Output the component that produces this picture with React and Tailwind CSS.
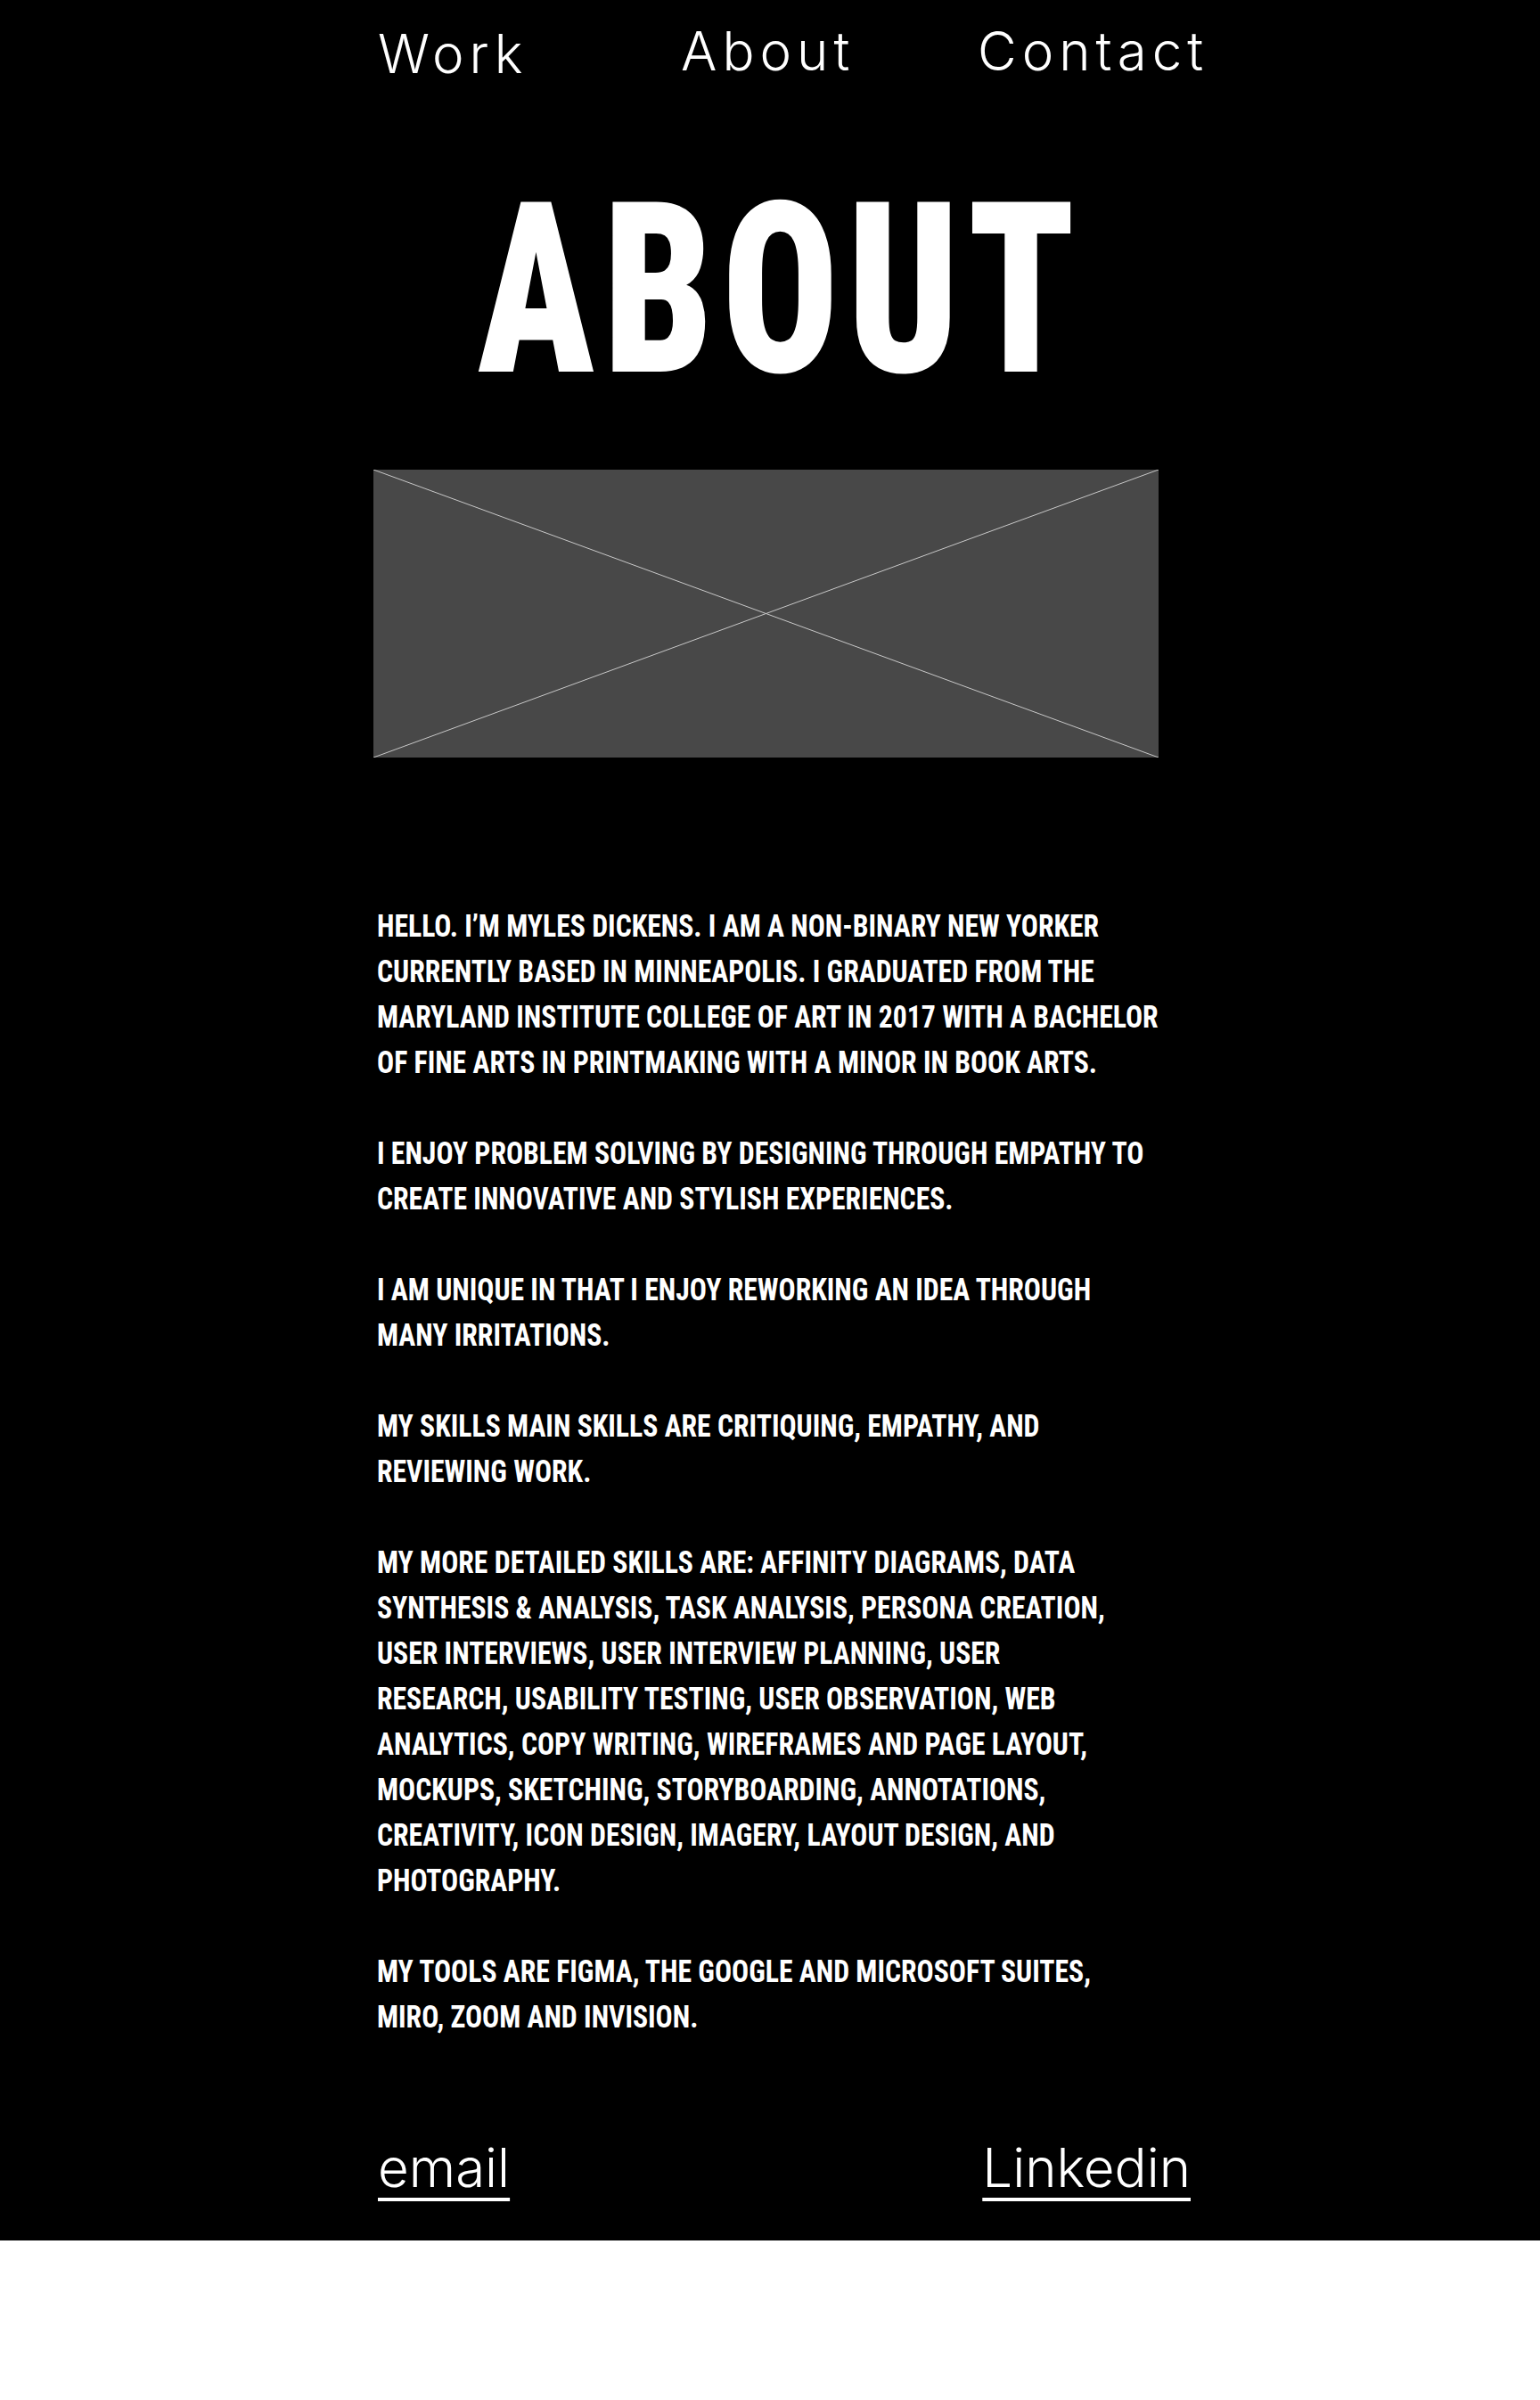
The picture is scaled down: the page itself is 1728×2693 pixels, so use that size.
const paragraphs = [
	[
		'HELLO. I’M MYLES DICKENS. I AM A NON-BINARY NEW YORKER',
		'CURRENTLY BASED IN MINNEAPOLIS. I GRADUATED FROM THE',
		'MARYLAND INSTITUTE COLLEGE OF ART IN 2017 WITH A BACHELOR',
		'OF FINE ARTS IN PRINTMAKING WITH A MINOR IN BOOK ARTS.',
	],
	[
		'I ENJOY PROBLEM SOLVING BY DESIGNING THROUGH EMPATHY TO',
		'CREATE INNOVATIVE AND STYLISH EXPERIENCES.',
	],
	[
		'I AM UNIQUE IN THAT I ENJOY REWORKING AN IDEA THROUGH',
		'MANY IRRITATIONS.',
	],
	[
		'MY SKILLS MAIN SKILLS ARE CRITIQUING, EMPATHY, AND',
		'REVIEWING WORK.',
	],
	[
		'MY MORE DETAILED SKILLS ARE: AFFINITY DIAGRAMS, DATA',
		'SYNTHESIS & ANALYSIS, TASK ANALYSIS, PERSONA CREATION,',
		'USER INTERVIEWS, USER INTERVIEW PLANNING, USER',
		'RESEARCH, USABILITY TESTING, USER OBSERVATION, WEB',
		'ANALYTICS, COPY WRITING, WIREFRAMES AND PAGE LAYOUT,',
		'MOCKUPS, SKETCHING, STORYBOARDING, ANNOTATIONS,',
		'CREATIVITY, ICON DESIGN, IMAGERY, LAYOUT DESIGN, AND',
		'PHOTOGRAPHY.',
	],
	[
		'MY TOOLS ARE FIGMA, THE GOOGLE AND MICROSOFT SUITES,',
		'MIRO, ZOOM AND INVISION.',
	],
]

function Placeholder() {
	return (
		<div className="w-[881px] h-[323px] bg-[#484848]">
			<svg className="w-full h-full" viewBox="0 0 881 323" preserveAspectRatio="none">
				<line x1="0" y1="0" x2="881" y2="323" stroke="#c8c8c8" strokeWidth="1" />
				<line x1="0" y1="323" x2="881" y2="0" stroke="#c8c8c8" strokeWidth="1" />
			</svg>
		</div>
	)
}

export default function App() {
	return (
		<div className="bg-black h-[2514px] text-white overflow-hidden">
			<nav className="flex pl-[424px] pt-[27px] font-['Inter',sans-serif] text-[60px] font-light leading-none tracking-[0.1em]">
				<a className="w-[340px] mt-[3px]">Work</a>
				<a className="w-[333px]">About</a>
				<a>Contact</a>
			</nav>

			<h1 className="mt-[101px] ml-[24px] h-[274px] text-center font-['Roboto_Condensed','Roboto',sans-serif] font-black text-[268px] leading-none">
				<span className="inline-block scale-x-[0.81] tracking-[12px]">ABOUT</span>
			</h1>

			<div className="pl-[419px] mt-[62px]">
				<Placeholder />
			</div>

			<div className="pl-[423px] mt-[164px] font-['Roboto_Condensed','Roboto',sans-serif] font-bold text-[35px]">
				<div className="origin-left scale-x-[0.906]">
					{paragraphs.map((p, i) => (
						<div key={i}>
							{i > 0 && <div className="h-[51px]" />}
							{p.map((line, j) => (
								<div key={j} className="h-[51px] leading-[51px] whitespace-nowrap">{line}</div>
							))}
						</div>
					))}
				</div>
			</div>

			<div className="flex pl-[424px] mt-[113px] font-['Inter',sans-serif] text-[60px] font-light leading-none">
				<a className="underline decoration-4 underline-offset-[12px]">email</a>
				<a className="ml-auto mr-[392px] underline decoration-4 underline-offset-[12px]">Linkedin</a>
			</div>
		</div>
	)
}
